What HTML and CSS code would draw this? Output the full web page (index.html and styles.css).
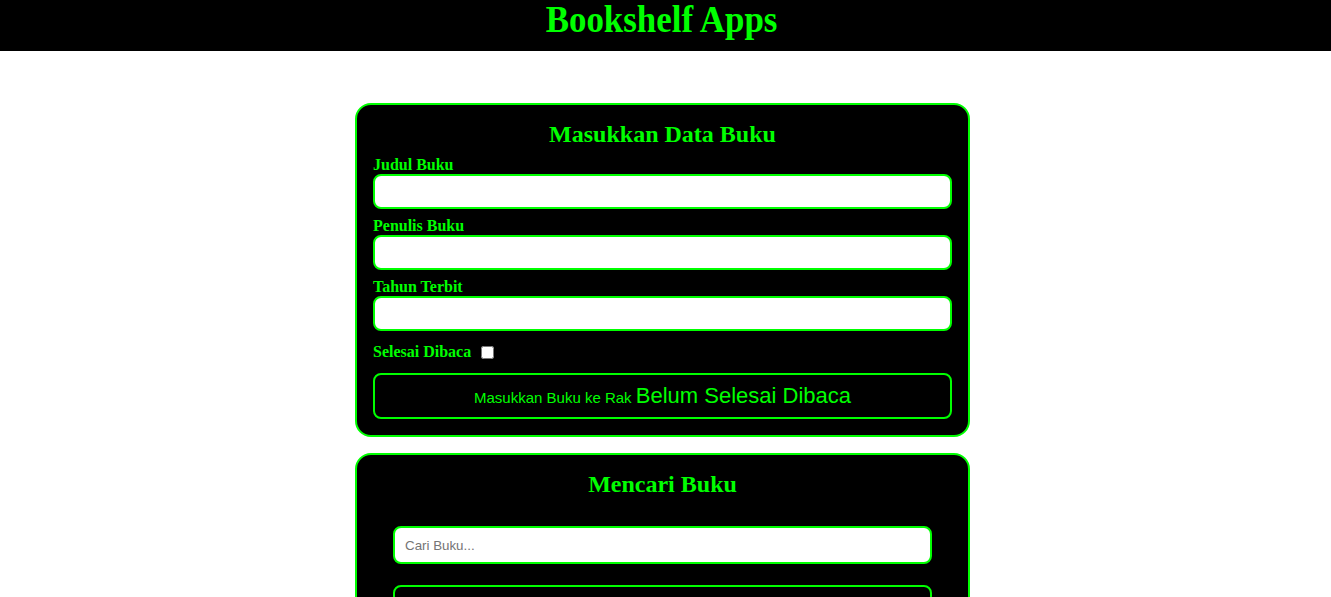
FILE: index.html
```html
<!DOCTYPE html>
<html lang="id">
<head>
<meta charset="utf-8">
<title>Bookshelf Apps</title>
<link rel="stylesheet" href="styles.css">
</head>
<body>
<header class="app-header">
  <h1 class="app-title"><span class="app-title-text">Bookshelf Apps</span></h1>
</header>
<main class="content">
  <section class="card">
    <h2 class="card-title">Masukkan Data Buku</h2>
    <form class="book-form">
      <div class="field">
        <label class="field-label" for="inputBookTitle">Judul Buku</label>
        <input class="field-input" id="inputBookTitle" type="text">
      </div>
      <div class="field">
        <label class="field-label" for="inputBookAuthor">Penulis Buku</label>
        <input class="field-input" id="inputBookAuthor" type="text">
      </div>
      <div class="field">
        <label class="field-label" for="inputBookYear">Tahun Terbit</label>
        <input class="field-input" id="inputBookYear" type="number">
      </div>
      <div class="field-inline">
        <label class="field-label inline-label" for="inputBookIsComplete">Selesai Dibaca</label>
        <input class="field-check" id="inputBookIsComplete" type="checkbox">
      </div>
      <button class="submit-btn" type="button">Masukkan Buku ke Rak <span class="submit-shelf">Belum Selesai Dibaca</span></button>
    </form>
  </section>
  <section class="card">
    <h2 class="card-title">Mencari Buku</h2>
    <form class="search-form">
      <input class="search-input" type="text" placeholder="Cari Buku...">
      <button class="search-btn" type="button">Cari</button>
    </form>
  </section>
</main>
</body>
</html>
```
FILE: styles.css
```css
html, body {
  margin: 0;
  padding: 0;
  background: #ffffff;
}

body {
  font-family: "Liberation Serif", "Times New Roman", serif;
}

.app-header {
  background: #000000;
  height: 51px;
  padding-right: 7px;
  text-align: center;
}

.app-title {
  margin: 0;
  font-size: 37.5px;
  line-height: 39px;
  font-weight: bold;
  color: #00ff00;
}

.app-title-text {
  display: inline-block;
  transform: scaleX(0.93);
}

.content {
  padding: 52px 6px 40px 0;
}

.card {
  width: 615px;
  box-sizing: border-box;
  margin: 0 auto 16px;
  padding: 16px;
  background: #000000;
  border: 2px solid #00ff00;
  border-radius: 16px;
}

.card-title {
  margin: 0;
  font-size: 24px;
  text-align: center;
  color: #00ff00;
}

.book-form {
  margin: 0;
}

.field {
  margin: 8px 0;
}

.field-label {
  display: block;
  font-size: 16px;
  font-weight: bold;
  color: #00ff00;
}

.field-input {
  display: block;
  width: 100%;
  box-sizing: border-box;
  padding: 8px;
  border: 2px solid #00ff00;
  border-radius: 8px;
  background: #ffffff;
  font-family: "Liberation Sans", Arial, sans-serif;
  font-size: 13.333px;
  outline: none;
}

.field-inline {
  margin: 12px 0;
  display: flex;
  align-items: center;
}

.inline-label {
  display: inline;
  margin-right: 10px;
}

.field-check {
  margin: 0;
  width: 13px;
  height: 13px;
}

.submit-btn {
  display: block;
  width: 100%;
  box-sizing: border-box;
  padding: 8px;
  background: #000000;
  color: #00ff00;
  border: 2px solid #00ff00;
  border-radius: 8px;
  font-family: "Liberation Sans", Arial, sans-serif;
  font-size: 15px;
  cursor: pointer;
}

.submit-shelf {
  font-size: 22px;
}

.search-form {
  margin: 0;
  padding: 28px 20px 4px;
}

.search-input {
  display: block;
  width: 100%;
  height: 38px;
  box-sizing: border-box;
  padding: 0 10px;
  border: 2px solid #00ff00;
  border-radius: 8px;
  background: #ffffff;
  font-family: "Liberation Sans", Arial, sans-serif;
  font-size: 13.333px;
  outline: none;
}

.search-input::placeholder {
  color: #757575;
}

.search-btn {
  display: block;
  width: 100%;
  box-sizing: border-box;
  margin-top: 21px;
  padding: 8px;
  background: #000000;
  color: #00ff00;
  border: 2px solid #00ff00;
  border-radius: 8px;
  font-family: "Liberation Sans", Arial, sans-serif;
  font-size: 15px;
}
```
